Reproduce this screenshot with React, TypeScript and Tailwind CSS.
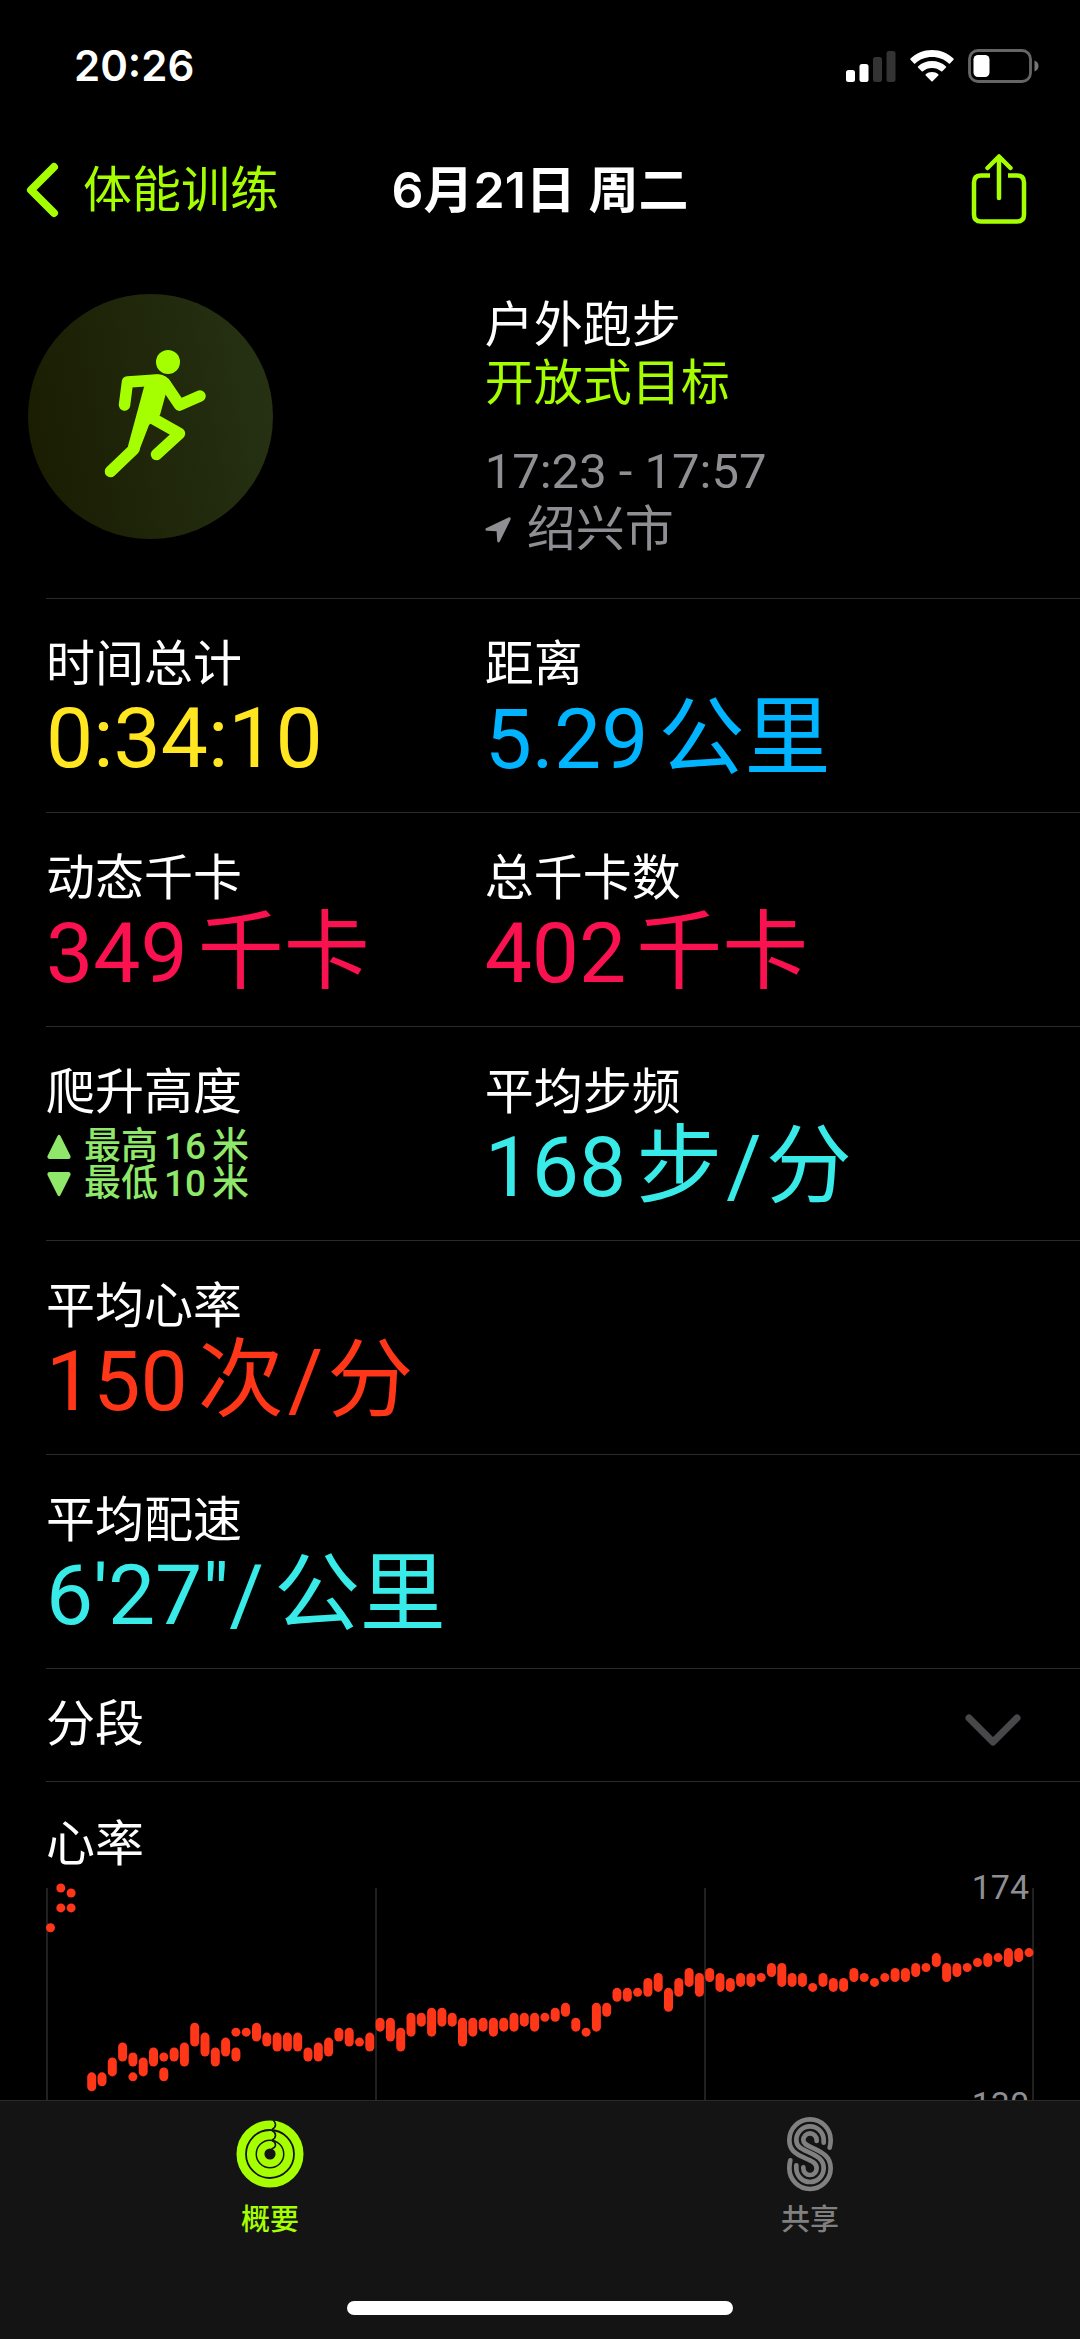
import type { ReactNode } from "react";

interface Metric {
  label: string;
  value: string;
  unit?: string[];
  color: string;
}

const rows: Metric[][] = [
  [
    { label: "时间总计", value: "0:34:10", color: "text-[#ffe620]" },
    { label: "距离", value: "5.29", unit: ["公里"], color: "text-[#00b4ff]" },
  ],
  [
    { label: "动态千卡", value: "349", unit: ["千卡"], color: "text-[#fa114f]" },
    { label: "总千卡数", value: "402", unit: ["千卡"], color: "text-[#fa114f]" },
  ],
];

const cadence: Metric = {
  label: "平均步频",
  value: "168",
  unit: ["步", "/", "分"],
  color: "text-[#38ebe8]",
};

const heartRate: Metric = {
  label: "平均心率",
  value: "150",
  unit: ["次", "/", "分"],
  color: "text-[#ff3618]",
};

const pace: Metric = {
  label: "平均配速",
  value: "6'27\"/",
  unit: ["公里"],
  color: "text-[#38ebe8]",
};

// [slot, highest bpm, lowest bpm]
const samples: [number, number, number][] = [
  [0, 166, 166], [1, 174, 174], [1, 170, 170], [2, 173, 173], [2, 170, 170],
  [4, 136, 134], [5, 136, 135], [6, 139, 137], [7, 142, 140], [8, 140, 139],
  [8, 136, 136], [9, 139, 137], [10, 141, 139], [11, 140, 140], [11, 137, 136],
  [12, 141, 140], [13, 142, 139], [14, 146, 143], [15, 144, 141], [16, 141, 139],
  [17, 143, 141], [18, 145, 145], [18, 141, 140], [19, 145, 145], [20, 146, 144],
  [21, 144, 143], [22, 144, 142], [23, 144, 142], [24, 144, 142], [25, 141, 140],
  [26, 142, 140], [27, 143, 141], [28, 145, 144], [29, 145, 143], [30, 143, 143],
  [31, 144, 142], [32, 147, 146], [33, 147, 144], [34, 145, 142], [35, 148, 145],
  [36, 148, 147], [37, 149, 145], [38, 149, 147], [39, 148, 147], [40, 147, 143],
  [41, 147, 145], [42, 147, 146], [43, 147, 145], [44, 147, 146], [45, 148, 146],
  [46, 148, 147], [47, 148, 146], [48, 148, 148], [49, 149, 148], [50, 150, 149],
  [51, 147, 146], [52, 145, 145], [53, 150, 146], [54, 150, 149], [55, 153, 152],
  [56, 153, 152], [57, 153, 153], [58, 155, 153], [59, 156, 154], [60, 153, 150],
  [61, 155, 153], [62, 157, 155], [63, 156, 153], [64, 157, 156], [65, 156, 154],
  [66, 155, 154], [67, 156, 155], [68, 156, 155], [69, 156, 156], [70, 158, 157],
  [71, 158, 155], [72, 156, 155], [73, 156, 155], [74, 154, 154], [75, 156, 155],
  [76, 155, 154], [77, 155, 154], [78, 157, 156], [79, 156, 156], [80, 155, 155],
  [81, 156, 156], [82, 157, 156], [83, 157, 156], [84, 158, 157], [85, 158, 158],
  [86, 160, 159], [87, 158, 156], [88, 158, 157], [89, 158, 158], [90, 159, 159],
  [91, 160, 159], [92, 160, 160], [93, 161, 159], [94, 161, 160], [95, 161, 161],
];

const bpmToY = (bpm: number) => 14 + (174 - bpm) * 4.97;

function StatusBar() {
  return (
    <div className="flex h-[132px] items-center justify-between pl-[74px] pr-[41px]">
      <span className="text-[42px] leading-[48px] font-semibold">20:26</span>
      <div className="flex items-center gap-[14px]">
        <svg width="50" height="32" viewBox="0 0 50 32" fill="#fff" aria-hidden="true">
          <rect x="0" y="20" width="9" height="12" rx="2.5" />
          <rect x="13.5" y="14" width="9" height="18" rx="2.5" />
          <rect x="27" y="7" width="9" height="25" rx="2.5" fill="#333" />
          <rect x="40.5" y="1" width="9" height="31" rx="2.5" fill="#333" />
        </svg>
        <svg width="44" height="32" viewBox="0 0 44 32" fill="#fff" aria-hidden="true">
          <path d="M22 0C13.6 0 6 3.300 .5 8.600Q0 9.200 .5 9.800L4 13.400Q4.600 14 5.200 13.400C9.600 9.300 15.500 7 22 7S34.400 9.300 38.800 13.400Q39.400 14 40 13.400L43.500 9.800Q44 9.200 43.500 8.600C38 3.300 30.400 0 22 0Z" />
          <path d="M22 11C16.600 11 11.700 13 8 16.400Q7.500 17 8 17.600L11.700 21.300Q12.300 21.800 12.900 21.300C15.400 19.200 18.500 18 22 18S28.600 19.200 31.100 21.300Q31.700 21.800 32.300 21.300L36 17.600Q36.500 17 36 16.400C32.300 13 27.400 11 22 11Z" />
          <path d="M22 22C19.600 22 17.400 22.900 15.700 24.300Q15.200 24.900 15.700 25.400L21.400 31.200Q22 31.700 22.600 31.200L28.300 25.400Q28.800 24.900 28.300 24.300C26.600 22.900 24.400 22 22 22Z" />
        </svg>
        <svg width="71" height="34" viewBox="0 0 71 34" aria-hidden="true">
          <rect x="1.500" y="1.500" width="61" height="31" rx="8.500" fill="none" stroke="#666" strokeWidth="2.800" />
          <rect x="5.500" y="6" width="16" height="22" rx="4.500" fill="#fff" />
          <path d="M66.500 11.500C69.300 12.500 70.500 14.500 70.500 17S69.300 21.500 66.500 22.500Z" fill="#777" />
        </svg>
      </div>
    </div>
  );
}

function NavBar() {
  return (
    <header className="grid h-[116px] grid-cols-[1fr_auto_1fr] items-center px-[25px]">
      <a href="#workouts" className="flex items-center gap-[24px] text-[49px] leading-[58px] text-[#a6ff00]">
        <svg width="34" height="56" viewBox="0 0 34 56" fill="none" stroke="currentColor" strokeWidth="8" strokeLinecap="round" strokeLinejoin="round" aria-hidden="true">
          <path d="M29 5L6 28L29 51" />
        </svg>
        体能训练
      </a>
      <h1 className="text-[50px] leading-[58px] font-semibold">6月21日 周二</h1>
      <button type="button" aria-label="分享" className="mr-7 justify-self-end text-[#a6ff00]">
        <svg width="56" height="72" viewBox="0 0 56 72" fill="none" stroke="currentColor" strokeWidth="4.500" strokeLinecap="round" aria-hidden="true">
          <path strokeLinecap="butt" d="M19 21.500H10Q3 21.500 3 28.500V60.500Q3 67.500 10 67.500H46Q53 67.500 53 60.500V28.500Q53 21.500 46 21.500H37" />
          <path strokeLinejoin="round" d="M28 44V3M16.500 14L28 2.500L39.500 14" />
        </svg>
      </button>
    </header>
  );
}

function Row({ children }: { children: ReactNode }) {
  return (
    <div className="ml-[46px] grid grid-cols-[14fr_19fr] border-b border-[#2a2a2c] pt-[37px] pb-[28px]">
      {children}
    </div>
  );
}

function MetricCell({ metric }: { metric: Metric }) {
  return (
    <div>
      <h2 className="text-[49px] leading-[58px]">{metric.label}</h2>
      <p className={`flex h-[90px] items-baseline gap-[10px] text-[84px] leading-[90px] ${metric.color}`}>
        <span>{metric.value}</span>
        {metric.unit && (
          <span className="flex items-baseline gap-1 text-[86px]">
            {metric.unit.map((part, idx) => (
              <span key={idx}>{part}</span>
            ))}
          </span>
        )}
      </p>
    </div>
  );
}

function Summary() {
  return (
    <section className="ml-[46px] grid grid-cols-[14fr_19fr] border-b border-[#2a2a2c] pt-[46px] pb-[39px]">
      <svg className="-ml-[18px]" width="245" height="245" viewBox="29 294 245 245" aria-hidden="true">
        <defs>
          <linearGradient id="badge" x1="0" y1="0.600" x2="1" y2="0.400">
            <stop offset="0" stopColor="#1a1d02" />
            <stop offset="1" stopColor="#263113" />
          </linearGradient>
        </defs>
        <circle cx="151.500" cy="416.500" r="122.500" fill="url(#badge)" />
        <g fill="#a6ff00">
          <circle cx="169" cy="362" r="12" />
          <path d="M145 387L152 375L160 374.500Q167 375 171.500 382L166.500 395L161 415L150 425L140 451Q134 455 129 446Z" />
        </g>
        <g fill="none" stroke="#a6ff00" strokeWidth="11.500" strokeLinecap="round" strokeLinejoin="round">
          <path d="M125.500 405L128.500 382L158 380Q164 380 167 385L180.500 405L201 396" />
          <path d="M153 418L180.500 433.500L157.500 454.500" />
          <path d="M135 449L111.500 471.500" />
        </g>
      </svg>
      <div className="pt-[3px] text-[49px] leading-[58px]">
        <p>户外跑步</p>
        <p className="text-[#a6ff00]">开放式目标</p>
        <p className="mt-[30px] text-[#8e8e93]">17:23 - 17:57</p>
        <p className="flex items-center gap-[16px] text-[#8e8e93]">
          <svg width="26" height="26" viewBox="0 0 26 26" fill="currentColor" aria-hidden="true">
            <path d="M23.600 .400L1 11.200Q-.600 13.600 2 13.800L11.600 14.200L12.200 24Q12.800 26.800 14.800 24.600L25.600 2.400Q26 -.400 23.600 .400Z" />
          </svg>
          绍兴市
        </p>
      </div>
    </section>
  );
}

function Elevation() {
  return (
    <div>
      <h2 className="text-[49px] leading-[58px]">爬升高度</h2>
      <div className="mt-[6px] text-[37px] leading-[37px] font-medium text-[#90e86b]">
        <p className="flex items-center gap-[6px]">
          <svg className="mr-[6px]" width="26" height="26" viewBox="0 0 26 26" fill="currentColor" aria-hidden="true">
            <path d="M11.500 2Q13 -.500 14.500 2L24.500 22Q25 25 22.500 25H3.500Q1 25 1.500 22Z" />
          </svg>
          <span>最高</span>
          <span>16</span>
          <span>米</span>
        </p>
        <p className="flex items-center gap-[6px]">
          <svg className="mr-[6px]" width="26" height="26" viewBox="0 0 26 26" fill="currentColor" aria-hidden="true">
            <path d="M11.500 24Q13 26.500 14.500 24L24.500 4Q25 1 22.500 1H3.500Q1 1 1.500 4Z" />
          </svg>
          <span>最低</span>
          <span>10</span>
          <span>米</span>
        </p>
      </div>
    </div>
  );
}

function HeartRateChart() {
  return (
    <section className="px-[46px] pt-[34px]">
      <h2 className="text-[49px] leading-[58px]">心率</h2>
      <svg className="block w-full overflow-visible" viewBox="0 0 988 250" role="img" aria-label="心率">
        {[1, 330, 659, 987].map((x) => (
          <path key={x} d={`M${x} 14V250`} stroke="#2c2c2e" strokeWidth="1.500" />
        ))}
        {samples.map(([slot, high, low]) => (
          <rect
            key={`${slot}-${high}`}
            x={slot * 10.3}
            y={bpmToY(high) - 4.5}
            width="9"
            height={(high - low) * 4.97 + 9}
            rx="4.500"
            fill="#ff3618"
          />
        ))}
        <g fill="#8e8e93" fontSize="34" textAnchor="end">
          <text x="983" y="25">174</text>
          <text x="983" y="242">130</text>
        </g>
      </svg>
    </section>
  );
}

function TabBar() {
  return (
    <footer className="shrink-0 border-t border-[#2a2a2a] bg-[#151414] pt-[15px] pb-6">
      <nav className="grid grid-cols-2 text-[29px] leading-[36px] font-medium">
        <a href="#summary" className="flex flex-col items-center gap-[10px] text-[#a6ff00]">
          <svg width="76" height="76" viewBox="-38 -38 76 76" fill="none" aria-hidden="true">
            <g stroke="currentColor">
              <circle r="29.200" strokeWidth="8.600" />
              <circle r="18.800" strokeWidth="8.600" />
              <circle r="9.300" strokeWidth="7.400" />
            </g>
            <g stroke="#151414" strokeWidth="1.600">
              <path d="M3 -34Q5.500 -32 5.500 -29.200T2 -24.500" />
              <path d="M2 -23.500Q5.500 -22 5.500 -18.800T2 -14" />
              <path d="M2 -13.500Q5.500 -12 5.500 -9.300T1.500 -5" />
            </g>
          </svg>
          概要
        </a>
        <a href="#sharing" className="flex flex-col items-center gap-[10px] text-[#808080]">
          <svg width="76" height="76" viewBox="95 78 228 228" fill="none" stroke="currentColor" strokeWidth="14" strokeLinecap="round" aria-hidden="true">
            <path d="M268 173C270 166 271 158 271 150A62 62 0 0 0 147 150C147 180 165 190 185 200C210 211 229 217 229 235A20 20 0 0 1 189 235V232" />
            <path d="M250 158V150A41 41 0 0 0 168 150C168 168 180 175 200 184C230 197 250 208 250 235A41 41 0 0 1 168 235V226" />
            <path d="M229 153V150A20 20 0 0 0 189 150C189 162 200 166 215 173C248 188 271 200 271 235A62 62 0 0 1 147 235C147 225 148 218 150 211" />
          </svg>
          共享
        </a>
      </nav>
      <div className="mx-auto mt-[63px] h-[14px] w-[386px] rounded-full bg-white" />
    </footer>
  );
}

export default function App() {
  return (
    <div className="flex h-screen flex-col bg-black font-[Roboto,'Noto_Sans_CJK_SC',sans-serif] text-white" lang="zh-CN">
      <div className="shrink-0 font-[Inter,'Noto_Sans_CJK_SC',sans-serif]">
        <StatusBar />
        <NavBar />
      </div>
      <main className="min-h-0 flex-1 overflow-hidden">
        <Summary />
        {rows.map((metrics) => (
          <Row key={metrics[0].label}>
            {metrics.map((metric) => (
              <MetricCell key={metric.label} metric={metric} />
            ))}
          </Row>
        ))}
        <Row>
          <Elevation />
          <MetricCell metric={cadence} />
        </Row>
        <Row>
          <MetricCell metric={heartRate} />
        </Row>
        <Row>
          <MetricCell metric={pace} />
        </Row>
        <div className="ml-[46px] border-b border-[#2a2a2c]">
          <button type="button" className="flex w-full items-center justify-between py-[27px] pr-[58px] text-left text-[49px] leading-[58px]">
            分段
            <svg className="mt-3" width="58" height="34" viewBox="0 0 58 34" fill="none" stroke="#48484a" strokeWidth="7" strokeLinecap="round" strokeLinejoin="round" aria-hidden="true">
              <path d="M5 4L29 28L53 4" />
            </svg>
          </button>
        </div>
        <HeartRateChart />
      </main>
      <TabBar />
    </div>
  );
}
